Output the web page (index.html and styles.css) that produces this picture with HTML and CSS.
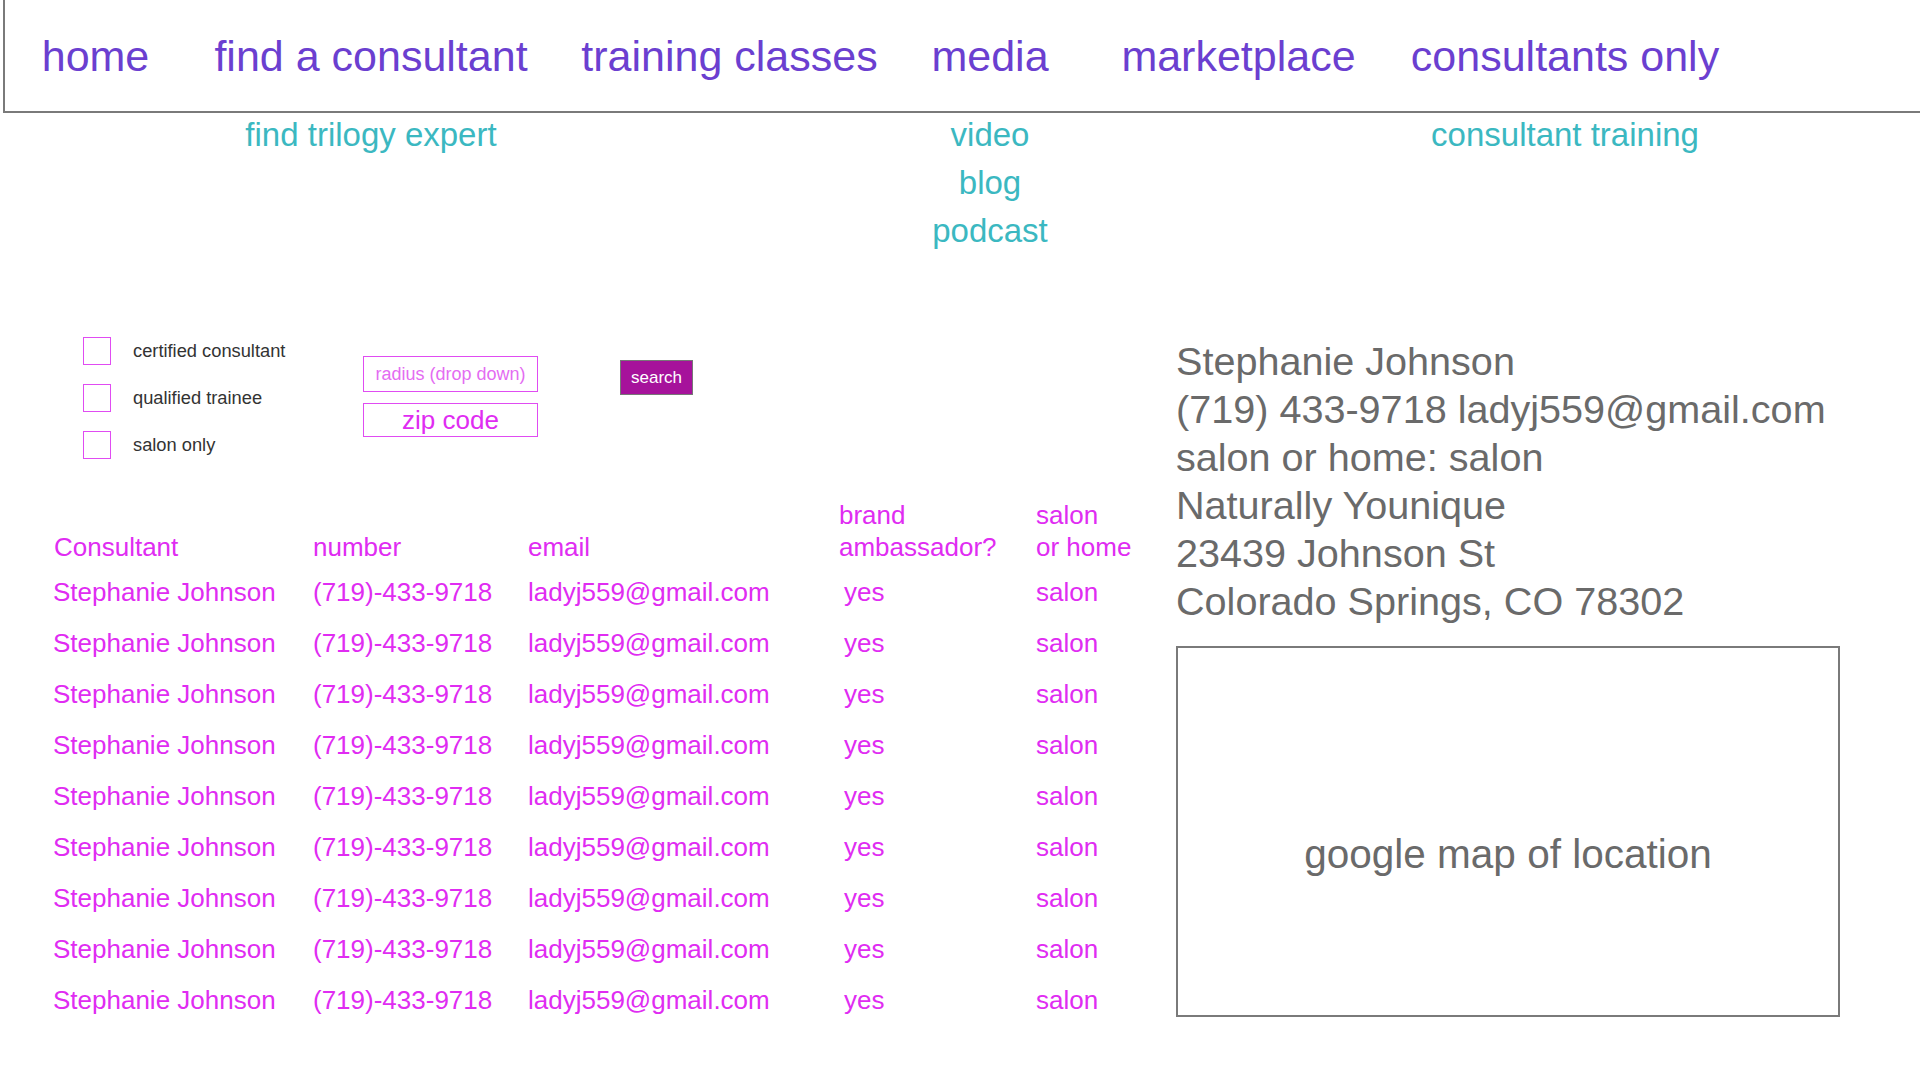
FILE: index.html
```html
<!DOCTYPE html>
<html lang="en">
<head>
<meta charset="utf-8">
<title>Find a consultant</title>
<link rel="stylesheet" href="styles.css">
</head>
<body>
<nav class="topnav">
  <div class="navgrid">
    <a class="navlink c1">home</a>
    <a class="navlink c2">find a consultant</a>
    <a class="navlink c3">training classes</a>
    <a class="navlink c4">media</a>
    <a class="navlink c5">marketplace</a>
    <a class="navlink c6">consultants only</a>
  </div>
</nav>
<div class="navgrid subnav">
  <ul class="sublist c2"><li>find trilogy expert</li></ul>
  <ul class="sublist c4"><li>video</li><li>blog</li><li>podcast</li></ul>
  <ul class="sublist c6"><li>consultant training</li></ul>
</div>

<main class="main">
  <section class="leftcol">
    <div class="filters">
      <div class="checks">
        <label class="check"><span class="box"></span><span>certified consultant</span></label>
        <label class="check"><span class="box"></span><span>qualified trainee</span></label>
        <label class="check"><span class="box"></span><span>salon only</span></label>
      </div>
      <div class="inputs">
        <div class="field radius">radius (drop down)</div>
        <div class="field zip">zip code</div>
      </div>
      <button class="search">search</button>
    </div>

    <div class="table">
      <div class="row head">
        <div>Consultant</div>
        <div>number</div>
        <div>email</div>
        <div>brand<br>ambassador?</div>
        <div>salon<br>or home</div>
      </div>
      <div class="row"><div>Stephanie Johnson</div><div>(719)-433-9718</div><div>ladyj559@gmail.com</div><div class="yes">yes</div><div>salon</div></div>
      <div class="row"><div>Stephanie Johnson</div><div>(719)-433-9718</div><div>ladyj559@gmail.com</div><div class="yes">yes</div><div>salon</div></div>
      <div class="row"><div>Stephanie Johnson</div><div>(719)-433-9718</div><div>ladyj559@gmail.com</div><div class="yes">yes</div><div>salon</div></div>
      <div class="row"><div>Stephanie Johnson</div><div>(719)-433-9718</div><div>ladyj559@gmail.com</div><div class="yes">yes</div><div>salon</div></div>
      <div class="row"><div>Stephanie Johnson</div><div>(719)-433-9718</div><div>ladyj559@gmail.com</div><div class="yes">yes</div><div>salon</div></div>
      <div class="row"><div>Stephanie Johnson</div><div>(719)-433-9718</div><div>ladyj559@gmail.com</div><div class="yes">yes</div><div>salon</div></div>
      <div class="row"><div>Stephanie Johnson</div><div>(719)-433-9718</div><div>ladyj559@gmail.com</div><div class="yes">yes</div><div>salon</div></div>
      <div class="row"><div>Stephanie Johnson</div><div>(719)-433-9718</div><div>ladyj559@gmail.com</div><div class="yes">yes</div><div>salon</div></div>
      <div class="row"><div>Stephanie Johnson</div><div>(719)-433-9718</div><div>ladyj559@gmail.com</div><div class="yes">yes</div><div>salon</div></div>
    </div>
  </section>

  <aside class="rightcol">
    <div class="contact">
      <div>Stephanie Johnson</div>
      <div>(719) 433-9718 ladyj559@gmail.com</div>
      <div>salon or home: salon</div>
      <div>Naturally Younique</div>
      <div>23439 Johnson St</div>
      <div>Colorado Springs, CO 78302</div>
    </div>
    <div class="map">google map of location</div>
  </aside>
</main>
</body>
</html>
```

FILE: styles.css
```css
html, body {
  margin: 0;
  padding: 0;
  background: #ffffff;
}

body {
  font-family: "Liberation Sans", Arial, sans-serif;
  width: 1920px;
  height: 1080px;
  overflow: hidden;
}

.topnav {
  margin-left: 3px;
  height: 111px;
  border-left: 2px solid #7a7a7a;
  border-bottom: 2px solid #7a7a7a;
  box-sizing: content-box;
}

.navgrid {
  display: grid;
  grid-template-columns: 105px 67px 312px 57px 291px 53px 124px 71px 231px 58px 306px;
  justify-items: center;
}

.topnav .navgrid {
  padding-left: 38px;
  padding-top: 32px;
}

.c1 { grid-column: 1; }
.c2 { grid-column: 3; }
.c3 { grid-column: 5; }
.c4 { grid-column: 7; }
.c5 { grid-column: 9; }
.c6 { grid-column: 11; }

.navlink {
  font-size: 43px;
  color: #6b3fd0;
  white-space: nowrap;
  text-decoration: none;
}

.subnav {
  padding-left: 43px;
  margin-top: -2px;
}

.sublist {
  list-style: none;
  margin: 0;
  padding: 0;
  text-align: center;
  font-size: 33px;
  line-height: 48px;
  color: #3bb8c1;
  white-space: nowrap;
}

.main {
  display: flex;
  margin-top: 82px;
}

.leftcol {
  width: 1123px;
  padding-left: 53px;
}

.filters {
  display: flex;
  align-items: flex-start;
  padding-left: 30px;
}

.checks {
  width: 280px;
  display: flex;
  flex-direction: column;
  gap: 19px;
}

.check {
  display: flex;
  align-items: center;
  gap: 22px;
  font-size: 18.3px;
  color: #333333;
}

.box {
  width: 26px;
  height: 26px;
  border: 1px solid #e04cf2;
  flex: none;
}

.inputs {
  width: 175px;
  display: flex;
  flex-direction: column;
  gap: 11px;
  margin-top: 19px;
}

.field {
  border: 1.5px solid #e04cf2;
  box-sizing: border-box;
  display: flex;
  align-items: center;
  justify-content: center;
  white-space: nowrap;
}

.radius {
  height: 36px;
  font-size: 18px;
  color: #e46cf2;
}

.zip {
  height: 34px;
  font-size: 26px;
  color: #e02cf2;
}

.search {
  margin-left: 82px;
  margin-top: 23px;
  width: 73px;
  height: 35px;
  background: #a6129b;
  border: 1px solid #777777;
  color: #ffffff;
  font-family: "Liberation Sans", Arial, sans-serif;
  font-size: 17px;
  padding: 0;
}

.table {
  margin-top: 40px;
  color: #e02cf2;
  font-size: 26px;
}

.row {
  display: grid;
  grid-template-columns: 260px 215px 311px 197px 140px;
  line-height: 51px;
  white-space: nowrap;
}

.row.head {
  line-height: 32px;
  align-items: end;
  margin-bottom: 4px;
}

.row.head > div:first-child {
  padding-left: 1px;
}

.yes {
  padding-left: 5px;
}

.rightcol {
  width: 664px;
}

.contact {
  font-size: 39.6px;
  line-height: 48px;
  color: #6a6a6a;
  white-space: nowrap;
}

.map {
  margin-top: 21px;
  width: 664px;
  height: 371px;
  box-sizing: border-box;
  border: 2px solid #7a7a7a;
  display: flex;
  align-items: center;
  justify-content: center;
  padding-top: 46px;
  font-size: 40.5px;
  color: #6a6a6a;
}
```
